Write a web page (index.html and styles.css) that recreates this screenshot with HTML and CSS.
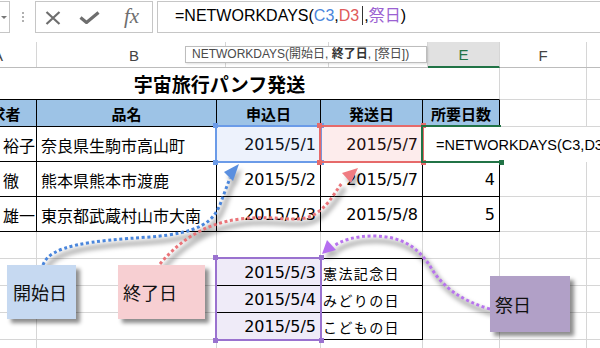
FILE: index.html
```html
<!DOCTYPE html>
<html lang="ja">
<head>
<meta charset="utf-8">
<title>NETWORKDAYS</title>
<link rel="stylesheet" href="styles.css">
</head>
<body>
<div class="page">
  <div class="fbar">
    <div class="namebox"><span class="dd"></span></div>
    <div class="grip"><i></i><i></i><i></i></div>
    <div class="fxgroup">
      <svg class="ic-x" width="16" height="14" viewBox="0 0 16 14"><path d="M1.5 1 L14.5 13 M14.5 1 L1.5 13" stroke="#6e6e6e" stroke-width="2.2" fill="none"/></svg>
      <svg class="ic-ok" width="21" height="13" viewBox="0 0 21 13"><path d="M1.5 6.5 L7.5 11.5 L19.5 1.5" stroke="#6e6e6e" stroke-width="3.2" fill="none"/></svg>
      <span class="fx">fx</span>
    </div>
    <div class="finput">=NETWORKDAYS(<span class="fc-b">C3</span>,<span class="fc-r">D3</span><span class="caret"></span>,<span class="fc-p">祭日</span>)</div>
  </div>

  <div class="colhdr">
    <div class="ch ch-a">A</div>
    <div class="ch ch-b">B</div>
    <div class="ch ch-c">C</div>
    <div class="ch ch-d">D</div>
    <div class="ch ch-e">E</div>
    <div class="ch ch-f">F</div>
    <div class="ch ch-g"></div>
  </div>

  <div class="sheetwrap">
    <div class="sheet">
      <div class="c title bb">宇宙旅行パンフ発送</div><div class="c"></div><div class="c"></div>

      <div class="c hd br bb">請求者</div><div class="c hd br bb">品名</div><div class="c hd br bb">申込日</div><div class="c hd br bb">発送日</div><div class="c hd br bb">所要日数</div><div class="c"></div><div class="c"></div>

      <div class="c br bb nm">裕子</div><div class="c br bb jp">奈良県生駒市高山町</div><div class="c br bb num">2015/5/1</div><div class="c br bb num">2015/5/7</div><div class="c bb noR edit"><span class="etext">=NETWORKDAYS(C3,D3</span></div><div class="c nob"></div><div class="c nob"></div>

      <div class="c br bb nm">徹</div><div class="c br bb jp">熊本県熊本市渡鹿</div><div class="c br bb num">2015/5/2</div><div class="c br bb num">2015/5/7</div><div class="c br bb num">4</div><div class="c"></div><div class="c"></div>

      <div class="c br bb nm">雄一</div><div class="c br bb jp">東京都武蔵村山市大南</div><div class="c br bb num">2015/5/3</div><div class="c br bb num">2015/5/8</div><div class="c br bb num">5</div><div class="c"></div><div class="c"></div>

      <div class="c"></div><div class="c"></div><div class="c bb"></div><div class="c bb"></div><div class="c"></div><div class="c"></div><div class="c"></div>

      <div class="c"></div><div class="c br"></div><div class="c br bb num hdate">2015/5/3</div><div class="c br bb hol">憲法記念日</div><div class="c"></div><div class="c"></div><div class="c"></div>
      <div class="c"></div><div class="c br"></div><div class="c br bb num hdate">2015/5/4</div><div class="c br bb hol">みどりの日</div><div class="c"></div><div class="c"></div><div class="c"></div>
      <div class="c"></div><div class="c br"></div><div class="c br bb num hdate">2015/5/5</div><div class="c br bb hol">こどもの日</div><div class="c"></div><div class="c"></div><div class="c"></div>

      <div class="c"></div><div class="c"></div><div class="c"></div><div class="c"></div><div class="c"></div><div class="c"></div><div class="c"></div>
    </div>

    <div class="sheet overlay">
      <div class="sel sel-blue at-c3"><span class="k tl"></span><span class="k tr"></span><span class="k bl"></span><span class="k br2"></span></div>
      <div class="sel sel-red at-d3"><span class="k tl"></span><span class="k tr"></span><span class="k bl"></span><span class="k br2"></span></div>
      <div class="sel sel-green at-e3"><span class="k br2"></span></div>
      <div class="sel sel-purple at-c7"><span class="k tl"></span><span class="k tr"></span><span class="k bl"></span><span class="k br2"></span></div>
    </div>
  </div>

  <div class="tooltip">NETWORKDAYS(開始日, <b>終了日</b>, [祭日])</div>

  <svg class="arrows" width="600" height="348" viewBox="0 0 600 348">
    <defs>
      <filter id="blur" x="-20%" y="-20%" width="140%" height="140%"><feGaussianBlur stdDeviation="2.2"/></filter>
    </defs>
    <g class="shadow" filter="url(#blur)" transform="translate(3 5)">
      <path d="M43 265 C50 245 90 241 150 237 C200 233 214 222 221 202 L230 178" />
      <path d="M160 264 C176 245 200 224 240 219 C280 214 300 226 318 212 C330 203 335 192 342 183" />
      <path d="M490 309 C462 301 442 287 430 266 C417 246 400 236 373 236 C356 236 342 240 334 246" />
      <polygon points="239,164 224,172 233,181" />
      <polygon points="358,168 342,173 351,183" />
      <polygon points="322,254 327,240 336,250" />
    </g>
    <g class="dots">
      <path class="d-blue" d="M43 265 C50 245 90 241 150 237 C200 233 214 222 221 202 L230 178" />
      <path class="d-red" d="M160 264 C176 245 200 224 240 219 C280 214 300 226 318 212 C330 203 335 192 342 183" />
      <path class="d-purple" d="M490 309 C462 301 442 287 430 266 C417 246 400 236 373 236 C356 236 342 240 334 246" />
    </g>
    <polygon class="a-blue" points="239,164 224,172 233,181" />
    <polygon class="a-red" points="358,168 342,173 351,183" />
    <polygon class="a-purple" points="322,254 327,240 336,250" />
  </svg>

  <div class="callout co-start">開始日</div>
  <div class="callout co-end">終了日</div>
  <div class="callout co-hol">祭日</div>
</div>
</body>
</html>
```

FILE: styles.css
```css
html, body {
  margin: 0;
  padding: 0;
  background: #fff;
}

.page {
  position: relative;
  width: 600px;
  height: 348px;
  overflow: hidden;
  font-family: "Liberation Sans", "Noto Sans CJK JP", sans-serif;
  color: #000;
}

/* ---------- formula bar ---------- */
.fbar {
  display: flex;
  align-items: flex-start;
  height: 34px;
  padding-top: 1px;
  box-sizing: border-box;
}

.namebox {
  flex-shrink: 0;
  width: 60px;
  height: 32px;
  margin-left: -50px;
  box-sizing: border-box;
  border: 1px solid #c6c6c6;
  display: flex;
  align-items: center;
  justify-content: flex-end;
  padding-right: 2px;
}

.dd {
  width: 0;
  height: 0;
  border-left: 3px solid transparent;
  border-right: 3px solid transparent;
  border-top: 3px solid #777;
}

.grip {
  flex-shrink: 0;
  width: 25px;
  height: 32px;
  display: flex;
  flex-direction: column;
  align-items: center;
  justify-content: center;
  gap: 2px;
}

.grip i {
  width: 2px;
  height: 2px;
  background: #b0b0b0;
}

.fxgroup {
  flex-shrink: 0;
  width: 118px;
  height: 32px;
  box-sizing: border-box;
  border: 1px solid #c6c6c6;
  display: flex;
  align-items: center;
  padding-left: 9px;
}

.ic-x { margin-top: 1px; }
.ic-ok { margin-left: 18px; margin-top: 1px; }

.fx {
  margin-left: 24px;
  font-family: "Liberation Serif", "DejaVu Serif", serif;
  font-style: italic;
  font-size: 21px;
  color: #6e6e6e;
  margin-top: -1px;
}

.finput {
  margin-left: 4px;
  flex: 1;
  margin-right: -20px;
  height: 32px;
  box-sizing: border-box;
  border: 1px solid #c6c6c6;
  padding: 4px 0 0 17px;
  font-size: 16px;
  line-height: 18px;
  white-space: nowrap;
}

.fc-b { color: #4a86dc; }
.fc-r { color: #e05a5a; }
.fc-p { color: #9b62d2; }

.caret {
  display: inline-block;
  width: 1px;
  height: 19px;
  background: #333;
  vertical-align: -4px;
  margin: 0 1px 0 3px;
}

/* ---------- column headers ---------- */
.colhdr {
  display: flex;
  margin-top: 8px;
  margin-left: -40px;
  height: 26px;
  box-sizing: border-box;
  border-bottom: 1px solid #bcbcbc;
}

.ch {
  flex-shrink: 0;
  box-sizing: border-box;
  border-right: 1px solid #d6d6d6;
  display: flex;
  align-items: center;
  justify-content: center;
  font-size: 15px;
  color: #444;
  padding-top: 1px;
}

.ch-a { width: 77px; }
.ch-b { width: 189px; padding-left: 6px; }
.ch-c { width: 103px; }
.ch-d { width: 99px; }
.ch-e {
  width: 72px;
  background: #e1e1e1;
  color: #217346;
  border-bottom: 2px solid #217346;
  margin-bottom: -1px;
}
.ch-f { width: 87px; }
.ch-g { width: 100px; }

/* ---------- sheet grid ---------- */
.sheetwrap {
  position: relative;
  margin-left: -40px;
}

.sheet {
  display: grid;
  grid-template-columns: 77px 180px 104px 102px 77px 87px 100px;
  grid-template-rows: 32px 27px 35px 35px 35px 27px 27px 27px 27px 27px;
  font-family: "DejaVu Sans", "Noto Sans CJK JP", sans-serif;
  font-size: 16px;
}

.c {
  box-sizing: border-box;
  border-right: 1px solid #d6d6d6;
  border-bottom: 1px solid #d6d6d6;
  display: flex;
  align-items: center;
  padding: 0 4px;
  white-space: nowrap;
  min-width: 0;
}

.br { border-right-color: #000; }
.bb { border-bottom-color: #000; }
.noR { border-right-color: transparent; }
.nob { border-right-color: transparent; border-bottom-color: transparent; }

.title {
  grid-column: 1 / 6;
  justify-content: center;
  padding-right: 24px;
  font-family: "Noto Sans CJK JP", sans-serif;
  font-weight: bold;
  font-size: 19px;
}

.hd {
  background: #9dc3e6;
  justify-content: center;
  font-family: "Noto Sans CJK JP", sans-serif;
  font-weight: bold;
  font-size: 15px;
}

.nm { padding-left: 43px; padding-top: 2px; }
.jp { padding-top: 2px; }

.num {
  justify-content: flex-end;
  padding-right: 4px;
  padding-top: 1px;
}

.hdate { background: #efebf8; }

.hol {
  font-size: 14px;
  letter-spacing: 1.4px;
  padding-left: 2px;
  padding-top: 2px;
}

.edit {
  overflow: visible;
  padding-left: 13px;
  font-family: "Liberation Sans", sans-serif;
  font-size: 14.5px;
}

.etext { padding-top: 1px; }

/* ---------- selections ---------- */
.overlay {
  position: absolute;
  left: 0;
  top: 0;
  right: 0;
  pointer-events: none;
}

.sel {
  position: relative;
  margin: -2px -1px -1px -2px;
  border: 2px solid;
}

.at-c3 { grid-area: 3 / 3 / 4 / 4; }
.at-d3 { grid-area: 3 / 4 / 4 / 5; }
.at-e3 { grid-area: 3 / 5 / 4 / 6; border-right: 0; }
.at-c7 { grid-area: 7 / 3 / 10 / 4; }

.sel-blue { border-color: #6b9be8; background: rgba(106, 150, 232, 0.12); }
.sel-red { border-color: #e66a6a; background: rgba(236, 110, 110, 0.13); }
.sel-green { border-color: #217346; }
.sel-purple { border-color: #9a72cf; }

.k {
  position: absolute;
  width: 5px;
  height: 5px;
}
.sel-blue .k { background: #6b9be8; }
.sel-red .k { background: #e66a6a; }
.sel-green .k { background: #217346; }
.sel-purple .k { background: #9a72cf; }

.k.tl { left: -4px; top: -4px; }
.k.tr { right: -4px; top: -4px; }
.k.bl { left: -4px; bottom: -4px; }
.k.br2 { right: -4px; bottom: -4px; }
.at-e3 .k.br2 { right: -3px; }

/* ---------- tooltip ---------- */
.tooltip {
  position: absolute;
  left: 185px;
  top: 46px;
  width: 242px;
  height: 17px;
  box-sizing: border-box;
  border: 1px solid #bdbdbd;
  background: #fff;
  box-shadow: 1px 1px 2px rgba(0, 0, 0, 0.12);
  font-size: 12px;
  line-height: 15px;
  padding-left: 6px;
  color: #4a4a4a;
  white-space: nowrap;
  overflow: hidden;
}

.tooltip b { font-weight: bold; color: #333; }

/* ---------- annotations ---------- */
.arrows {
  position: absolute;
  left: 0;
  top: 0;
}

.shadow path {
  fill: none;
  stroke: rgba(0, 0, 0, 0.28);
  stroke-width: 5;
}
.shadow polygon { fill: rgba(0, 0, 0, 0.28); }

.dots path {
  fill: none;
  stroke-width: 3;
  stroke-dasharray: 3 2.6;
}
.d-blue { stroke: #4a86dc; }
.d-red { stroke: #ea7479; }
.d-purple { stroke: #b874ee; }

.a-blue { fill: #5a8fdf; }
.a-red { fill: #ef7c82; }
.a-purple { fill: #b56ef0; }

.callout {
  position: absolute;
  box-sizing: border-box;
  display: flex;
  align-items: center;
  font-family: "Noto Sans CJK JP", sans-serif;
  font-size: 18px;
  color: #111;
  box-shadow: 4px 4px 4px rgba(0, 0, 0, 0.45);
}

.co-start {
  left: 7px;
  top: 265px;
  width: 69px;
  height: 54px;
  background: #c6d9f1;
  padding-left: 6px;
}

.co-end {
  left: 118px;
  top: 265px;
  width: 87px;
  height: 54px;
  background: #f7cfd2;
  padding-left: 5px;
}

.co-hol {
  left: 490px;
  top: 276px;
  width: 80px;
  height: 56px;
  background: #b1a0c7;
  padding-left: 5px;
}
```
